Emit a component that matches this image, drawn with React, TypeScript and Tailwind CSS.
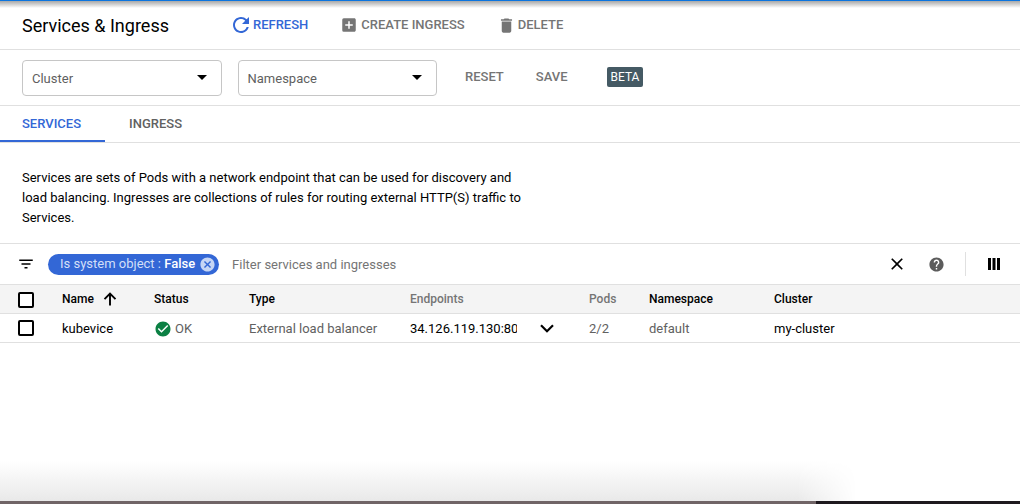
import { useState } from "react";
import type { ReactNode } from "react";
import {
  MdAddBox,
  MdCancel,
  MdCheckCircle,
  MdClose,
  MdDelete,
  MdFilterList,
  MdHelp,
  MdRefresh,
} from "react-icons/md";

function FilterSelect({ label }: { label: string }) {
  return (
    <div className="relative w-full max-w-[200px]">
      <select
        aria-label={label}
        className="block h-9 w-full appearance-none rounded border border-[#c6c6c6] bg-white pt-[2px] pr-8 pl-[9px] text-[13px] text-[#5f5f5f]"
      >
        <option>{label}</option>
      </select>
      <svg
        viewBox="0 0 10 5"
        className="pointer-events-none absolute top-[15px] right-[15px] h-[5px] w-[10px]"
        aria-hidden="true"
      >
        <path d="M0 0h10L5 5z" fill="#000" />
      </svg>
    </div>
  );
}

function SortArrow() {
  return (
    <svg viewBox="0 0 14 14" className="mx-[2px] block size-[14px]" aria-hidden="true">
      <path d="M7 13.5V2M1.5 7.2L7 1.7l5.5 5.5" fill="none" stroke="#000" strokeWidth="1.9" />
    </svg>
  );
}

function Tab({
  active,
  onClick,
  children,
}: {
  active: boolean;
  onClick: () => void;
  children: ReactNode;
}) {
  return (
    <button
      type="button"
      role="tab"
      aria-selected={active}
      onClick={onClick}
      className={
        active
          ? "border-b-2 border-[#3367d6] px-6 pt-[2px] text-[13px] font-medium text-[#3367d6] first:pl-[22px]"
          : "border-b-2 border-transparent px-6 pt-[2px] text-[13px] font-medium text-[#616161] first:pl-[22px]"
      }
    >
      {children}
    </button>
  );
}

function Checkbox({ label }: { label: string }) {
  return (
    <input
      type="checkbox"
      aria-label={label}
      className="block size-4 appearance-none rounded-[2px] border-2 border-black bg-white checked:bg-[#3367d6]"
    />
  );
}

const services = [
  {
    name: "kubevice",
    status: "OK",
    type: "External load balancer",
    endpoint: "34.126.119.130:80",
    pods: "2/2",
    namespace: "default",
    cluster: "my-cluster",
  },
];

export default function App() {
  const [tab, setTab] = useState("services");

  return (
    <div className="flex min-h-screen flex-col bg-white font-[Roboto,sans-serif] text-[13px] text-black">
      <div className="h-px bg-[#0b74de]" />
      <header className="flex h-[49px] items-center border-b border-[#e0e0e0] bg-linear-to-b from-[#a8a8a8] to-white to-[7px] pl-[22px]">
        <h1 className="w-[207px] pt-[2px] text-lg">Services &amp; Ingress</h1>
        <div className="flex items-center gap-8 font-medium text-[#757575]">
          <button type="button" className="flex items-center text-[#3367d6]">
            <MdRefresh className="size-6" />
            REFRESH
          </button>
          <button type="button" className="flex items-center gap-[3px]">
            <MdAddBox className="size-[18px]" />
            CREATE INGRESS
          </button>
          <button type="button" className="flex items-center gap-[2px]">
            <MdDelete className="size-[19px]" />
            DELETE
          </button>
        </div>
      </header>

      <div className="flex h-14 items-center border-b border-[#e0e0e0] pl-[22px]">
        <div className="flex w-[415px] gap-4">
          <FilterSelect label="Cluster" />
          <FilterSelect label="Namespace" />
        </div>
        <div className="flex items-center gap-8 pb-[2px] pl-7 font-medium text-[#757575]">
          <button type="button">RESET</button>
          <button type="button">SAVE</button>
        </div>
        <span className="mb-[2px] ml-[39px] rounded-[2px] bg-[#455a64] px-1 text-xs leading-5 text-white">
          BETA
        </span>
      </div>

      <div role="tablist" className="flex h-[37px] border-b border-[#e0e0e0]">
        <Tab active={tab === "services"} onClick={() => setTab("services")}>
          SERVICES
        </Tab>
        <Tab active={tab === "ingress"} onClick={() => setTab("ingress")}>
          INGRESS
        </Tab>
      </div>

      <section className="border-b border-[#e0e0e0] px-[22px] pt-[25px] pb-[15px]">
        <p className="max-w-[510px] leading-5">
          Services are sets of Pods with a network endpoint that can be used for discovery and load
          balancing. Ingresses are collections of rules for routing external HTTP(S) traffic to
          Services.
        </p>
      </section>

      <div className="flex h-10 items-center pr-5 pl-[17px]">
        <MdFilterList className="size-[18px]" />
        <div className="ml-[13px] flex h-[21px] items-center gap-1 rounded-full bg-[#3367d6] pr-[3px] pl-3 text-[#d2dff8]">
          <span>
            Is system object : <b className="font-medium text-white">False</b>
          </span>
          <button type="button" aria-label="Remove filter">
            <MdCancel className="block size-[17px] text-[#c5d5f5]" />
          </button>
        </div>
        <input
          type="text"
          aria-label="Filter services and ingresses"
          placeholder="Filter services and ingresses"
          className="ml-[13px] min-w-0 flex-1 pt-px text-[13px] outline-none placeholder:text-[#757575]"
        />
        <button type="button" aria-label="Clear filters">
          <MdClose className="block size-5" />
        </button>
        <button type="button" aria-label="Help" className="ml-[21px]">
          <MdHelp className="block size-[17px] text-[#5c5c5c]" />
        </button>
        <div className="ml-5 h-6 w-px bg-[#e0e0e0]" />
        <button type="button" aria-label="Column display options" className="ml-[22px]">
          <svg viewBox="0 0 12 12" className="block size-3" aria-hidden="true">
            <path d="M0 0h3v12H0zM4.5 0h3v12h-3zM9 0h3v12H9z" fill="#000" />
          </svg>
        </button>
      </div>

      <table className="w-full table-fixed border-collapse text-left">
        <colgroup>
          <col className="w-[62px]" />
          <col className="w-[92px]" />
          <col className="w-[95px]" />
          <col className="w-[161px]" />
          <col className="w-[179px]" />
          <col className="w-[60px]" />
          <col className="w-[125px]" />
          <col />
        </colgroup>
        <thead>
          <tr className="h-[29px] border-y border-[#e0e0e0] bg-[#f4f4f4] text-xs">
            <th className="pt-px pl-[18px]">
              <Checkbox label="Select all services" />
            </th>
            <th className="font-medium">
              <button type="button" className="flex items-center gap-[7px]">
                Name
                <SortArrow />
              </button>
            </th>
            <th className="font-medium">Status</th>
            <th className="font-medium">Type</th>
            <th className="font-medium text-[#757575]">Endpoints</th>
            <th className="font-medium text-[#757575]">Pods</th>
            <th className="font-medium">Namespace</th>
            <th className="font-medium">Cluster</th>
          </tr>
        </thead>
        <tbody>
          {services.map((s) => (
            <tr
              key={s.name}
              className="h-[29px] border-b border-[#e0e0e0] text-[#616161] *:not-first:pt-px"
            >
              <td className="pl-[18px]">
                <Checkbox label={`Select ${s.name}`} />
              </td>
              <td>
                <a href="#service" className="text-black">
                  {s.name}
                </a>
              </td>
              <td>
                <span className="flex items-center gap-[3px]">
                  <MdCheckCircle className="size-[18px] text-[#0b8043]" />
                  {s.status}
                </span>
              </td>
              <td>{s.type}</td>
              <td>
                <div className="flex items-center">
                  <a
                    href="#endpoint"
                    className="w-[107px] overflow-hidden whitespace-nowrap text-black"
                  >
                    {s.endpoint}
                  </a>
                  <button type="button" aria-label="Show all endpoints" className="ml-[23px]">
                    <svg viewBox="0 0 14 9" className="block h-[9px] w-[14px]" aria-hidden="true">
                      <path d="M1 1.2l6 6 6-6" fill="none" stroke="#000" strokeWidth="2.2" />
                    </svg>
                  </button>
                </div>
              </td>
              <td>{s.pods}</td>
              <td>{s.namespace}</td>
              <td>
                <a href="#cluster" className="text-black">
                  {s.cluster}
                </a>
              </td>
            </tr>
          ))}
        </tbody>
      </table>

      <div className="mt-auto">
        <div className="h-10 w-[84%] bg-linear-to-b from-white to-[#e9e9e9] mask-r-from-93% mask-r-to-100%" />
        <div className="flex h-[3px] bg-[#1e191e]">
          <div className="w-[80%] bg-[#706466]" />
        </div>
      </div>
    </div>
  );
}
